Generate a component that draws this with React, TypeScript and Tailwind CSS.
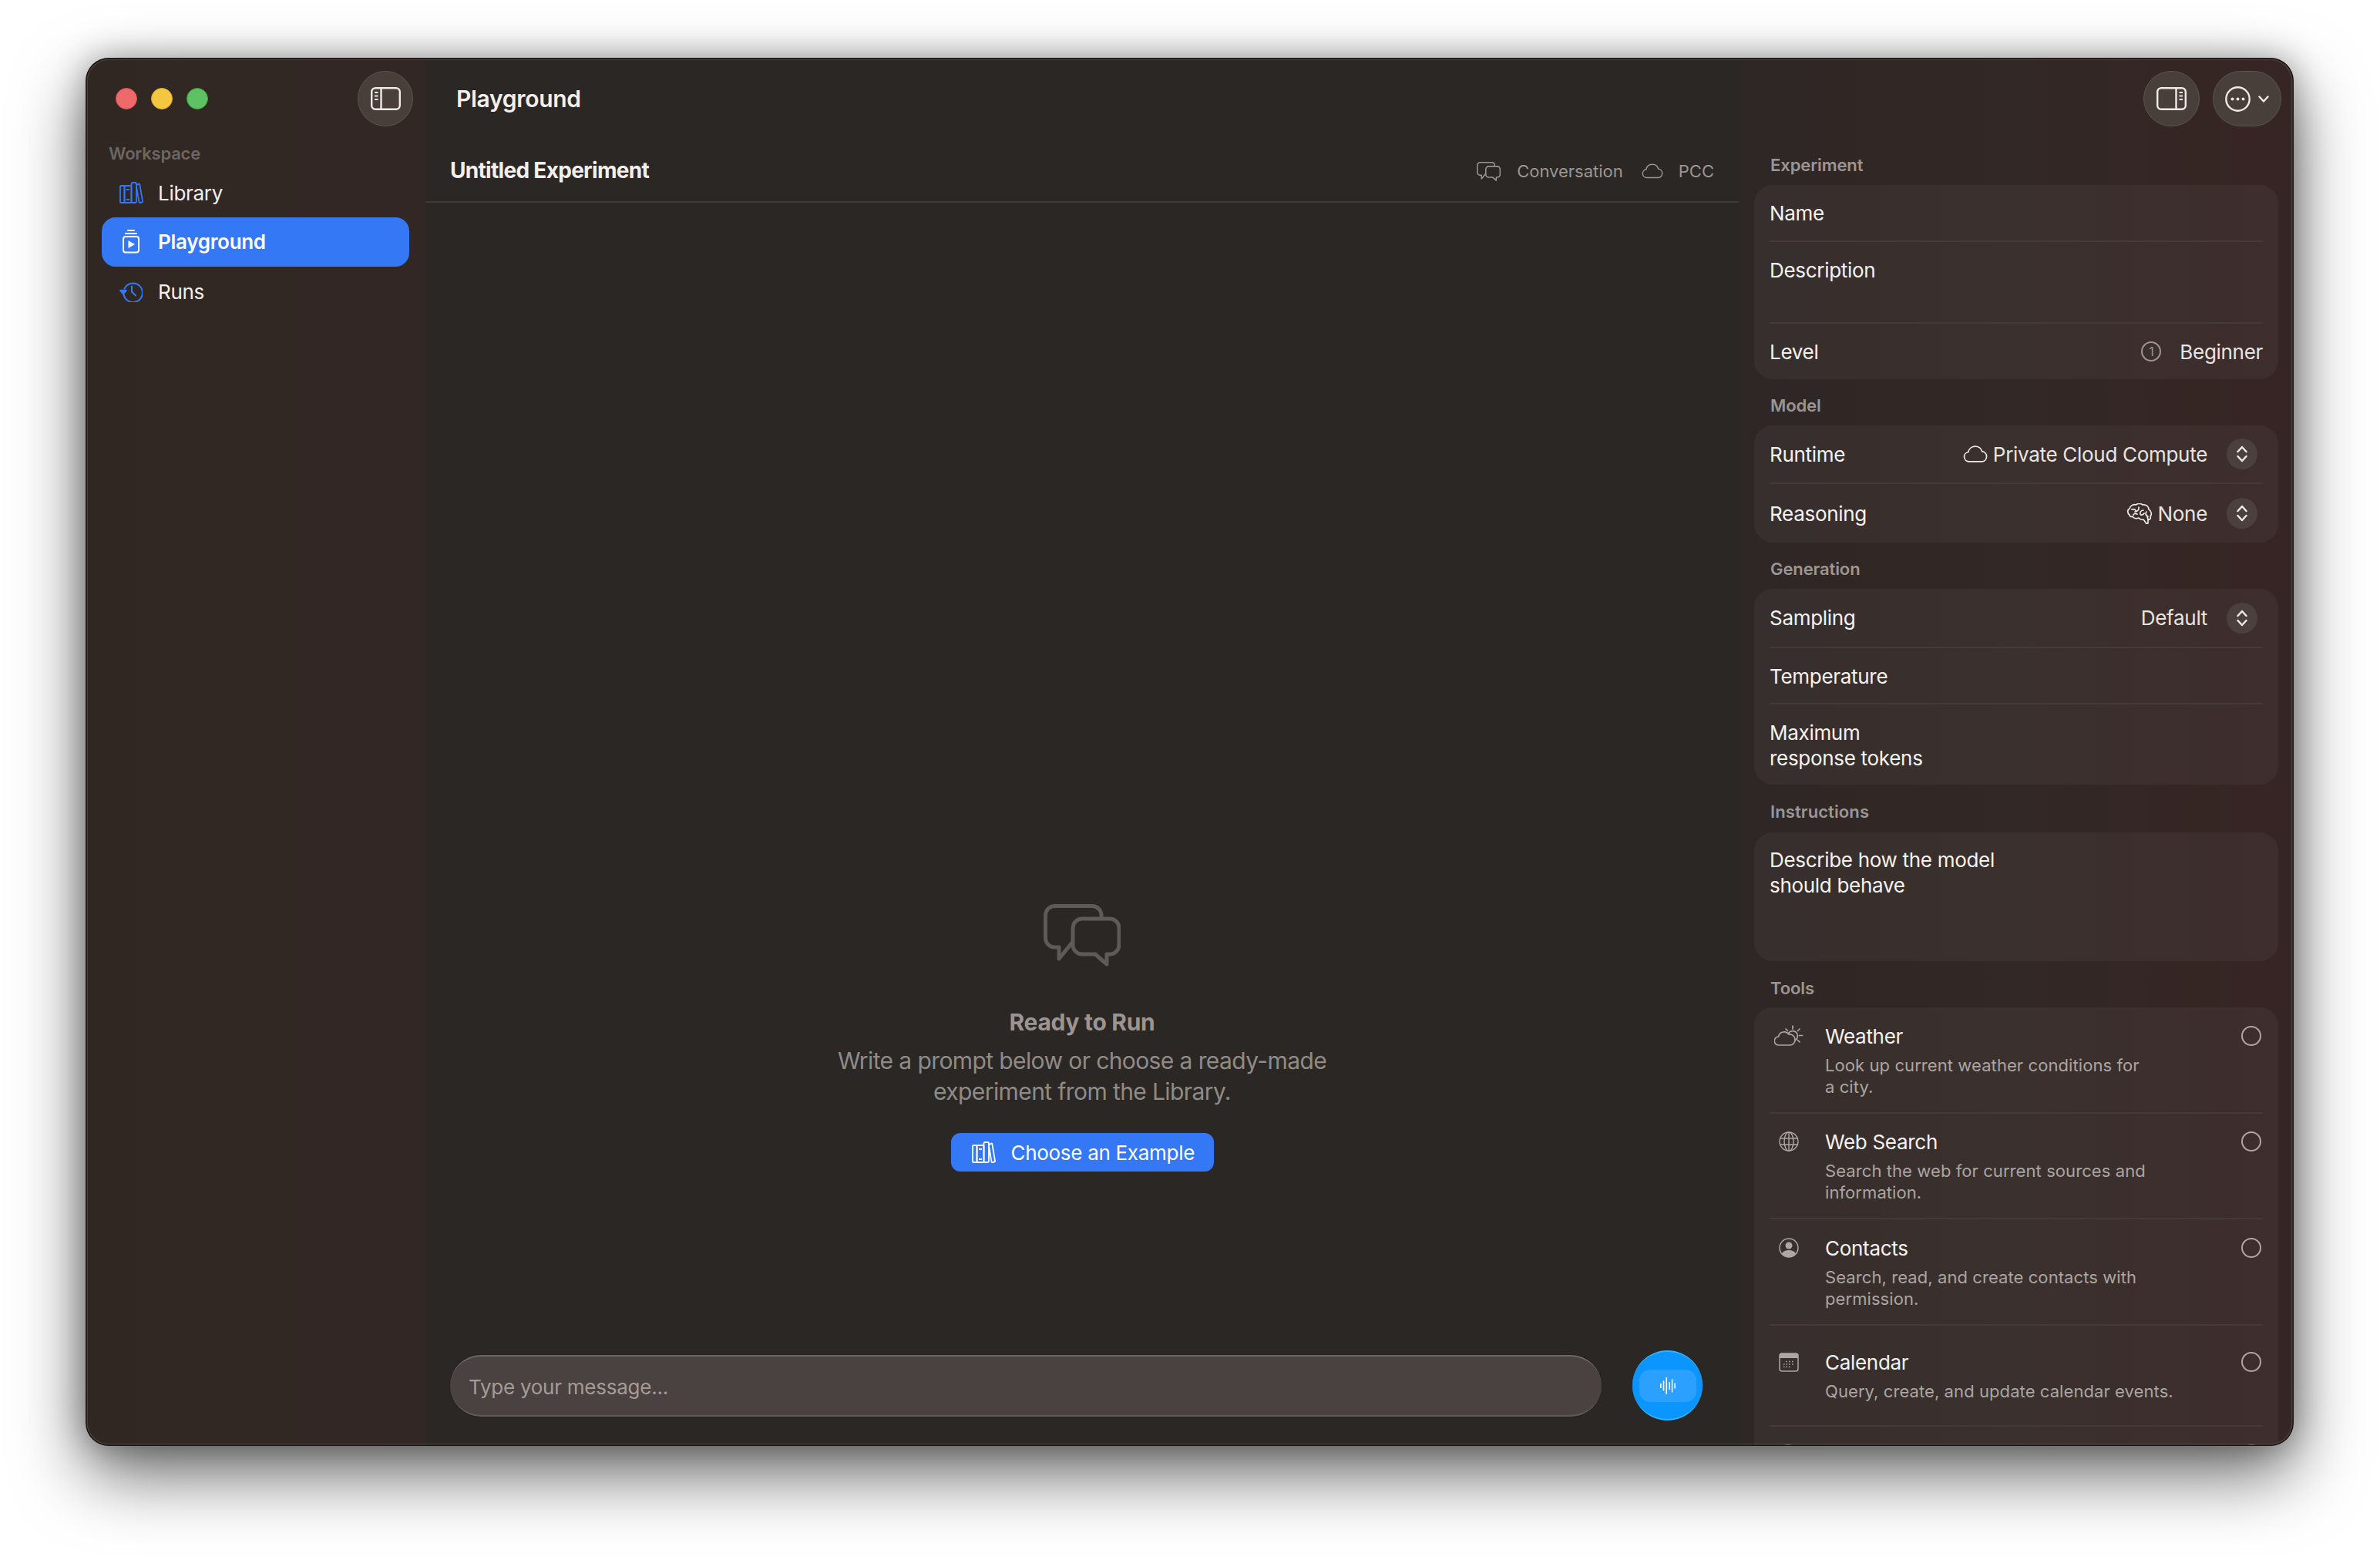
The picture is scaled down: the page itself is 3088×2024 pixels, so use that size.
import type { ReactNode } from "react";

function BooksIcon({ className }: { className?: string }) {
  return (
    <svg viewBox="0 0 31 28" width="31" height="28" fill="none" stroke="currentColor" strokeWidth="1.8" strokeLinejoin="round" className={className}>
      <rect x="1" y="5" width="5.5" height="22" rx="1" />
      <rect x="6.5" y="5" width="9" height="22" rx="1" />
      <rect x="15.5" y="1" width="6.5" height="26" rx="1.5" />
      <path d="M22 4.2 25 2.6c.6-.3 1.2 0 1.3.6L30 25.2c.1.6-.2 1.1-.8 1.3l-2.4.5c-.6.1-1.2-.2-1.3-.8L22 6" />
      <path d="M9 10h4M9 23h4" />
    </svg>
  );
}

function PlaygroundIcon() {
  return (
    <svg viewBox="0 0 24 31" width="24" height="31" fill="none" stroke="currentColor" strokeWidth="2" className="text-white">
      <path d="M8 1h8M5 5h14" strokeLinecap="round" />
      <rect x="2" y="9" width="20" height="20.5" rx="3" />
      <path d="M8.5 14v10l8.5-5z" fill="currentColor" stroke="none" />
    </svg>
  );
}

function RunsIcon() {
  return (
    <svg viewBox="0 0 30 28" width="30" height="28" fill="none" stroke="#3478f6" strokeWidth="2" strokeLinecap="round" strokeLinejoin="round">
      <path d="M6.5 10.5A12.3 12.3 0 1 1 5.5 18" />
      <path d="M1.2 12.8h7.6l-3.8 4.6z" fill="#3478f6" />
      <path d="M16 7.5v7l5 5" />
    </svg>
  );
}

function SidebarIcon({ right }: { right?: boolean }) {
  return (
    <svg viewBox="0 0 39 30" width="39" height="30" fill="none" stroke="#eeeae8" strokeWidth="2.4">
      <rect x="1.2" y="1.2" width="36.6" height="27.6" rx="5" />
      {right ? (
        <>
          <path d="M25.5 1.2v27.6" />
          <path d="M29.5 7h4.5M29.5 11.5h4.5M29.5 16h4.5" strokeWidth="1.8" />
        </>
      ) : (
        <>
          <path d="M13.5 1.2v27.6" />
          <path d="M5 7h4.5M5 11.5h4.5M5 16h4.5" strokeWidth="1.8" />
        </>
      )}
    </svg>
  );
}

function BubblesIcon({ width, height, stroke }: { width: number; height: number; stroke: string }) {
  return (
    <svg viewBox="0 0 100 81" width={width} height={height} fill="none" stroke={stroke} strokeWidth="5" strokeLinejoin="round" strokeLinecap="round">
      <path d="M75 17v-3A12 12 0 0 0 63 2.500H14.500A12 12 0 0 0 2.500 14.500V44A12 12 0 0 0 14.500 56H20V71L37 50" />
      <path d="M50 19h36a12 12 0 0 1 12 12v22a12 12 0 0 1-12 12h-4v13L67 65H50a12 12 0 0 1-12-12V31a12 12 0 0 1 12-12z" />
    </svg>
  );
}

function CloudIcon({ width = 32, height = 22, color = "#eeeae8" }: { width?: number; height?: number; color?: string }) {
  return (
    <svg viewBox="0 0 32 22" width={width} height={height} fill="none" stroke={color} strokeWidth="1.7">
      <path d="M7.500 20.800A6.200 6.200 0 0 1 6.700 8.500 9.300 9.300 0 0 1 24.700 7.700 6.600 6.600 0 0 1 24.800 20.800z" />
    </svg>
  );
}

function BrainIcon() {
  return (
    <svg viewBox="0 0 34 27" width="34" height="27" fill="none" stroke="#eeeae8" strokeWidth="1.700" strokeLinecap="round" strokeLinejoin="round">
      <path d="M4 15C1 13 1 8 4 7 5 3 9 1 12 2c3-2 7-2 9 0 4-1 8 2 8 6 4 2 4 7 2 9 1 3-1 5-3 4v4c0 2-2 2-3 0l-3-4c-3 1-5-1-6-2-3 1-7 1-8-2-2 1-4 0-4-2z" />
      <path d="M7 8c2-1 5 0 5 2M16 5c1 3-2 6-5 6M22 9c-3 0-5 3-4 5s4 1 5-1M26 11c-2 2-1 5 2 6M28 21l-1-4M9 15c1-2 3-2 5-1" />
    </svg>
  );
}

function Stepper() {
  return (
    <div className="ml-[25px] flex h-[40px] w-[40px] items-center justify-center rounded-full bg-[#4b403e]">
      <svg viewBox="0 0 16 24" width="16" height="24" fill="none" stroke="#eeeae8" strokeWidth="2.500" strokeLinecap="round" strokeLinejoin="round">
        <path d="M2.500 9 8 3l5.500 6M2.500 15 8 21l5.500-6" />
      </svg>
    </div>
  );
}

function WeatherIcon() {
  return (
    <svg viewBox="0 0 38 27" width="38" height="27" fill="none" stroke="#aca7a4" strokeWidth="1.700" strokeLinecap="round">
      <path d="M6 26A5.500 5.500 0 0 1 5.500 15 7.500 7.500 0 0 1 19 12 6.600 6.600 0 0 1 21 26z" />
      <path d="M18.500 10.500A6.500 6.500 0 1 1 27.500 19.500" />
      <path d="M24 1v4M15 5l2.500 2.500M33 5l-2.500 2.500M36.500 13.500h-4M33 22l-2.500-2.500" />
    </svg>
  );
}

function GlobeIcon() {
  return (
    <svg viewBox="0 0 26 28" width="26" height="28" fill="none" stroke="#aca7a4" strokeWidth="1.400">
      <circle cx="13" cy="14" r="12" />
      <ellipse cx="13" cy="14" rx="6" ry="12" />
      <path d="M13 2v24M1.500 10h23M1.500 18h23" />
    </svg>
  );
}

function ContactIcon() {
  return (
    <svg viewBox="0 0 26 28" width="26" height="28" fill="none">
      <circle cx="13" cy="14" r="12" stroke="#aca7a4" strokeWidth="1.500" />
      <circle cx="13" cy="11" r="4.500" fill="#aca7a4" />
      <path d="M3.800 21.500C6 18 9.500 17 13 17s7 1 9.200 4.500A12 12 0 0 1 13 26a12 12 0 0 1-9.200-4.500z" fill="#aca7a4" />
    </svg>
  );
}

function CalendarIcon() {
  return (
    <svg viewBox="0 0 26 25" width="26" height="25" fill="none">
      <rect x="1" y="1" width="24" height="23" rx="3" stroke="#aca7a4" strokeWidth="1.500" />
      <path d="M1 4a3 3 0 0 1 3-3h18a3 3 0 0 1 3 3v3H1z" fill="#aca7a4" />
      <path d="M9 11.500h1.500M13 11.500h1.500M17 11.500h1.500M6 15h1.500M9.500 15H11M13 15h1.500M17 15h1.500M6 18.500h1.500M9.500 18.500H11M13 18.500h1.500" stroke="#aca7a4" strokeWidth="1.400" />
    </svg>
  );
}

function SectionLabel({ children, tight }: { children: ReactNode; tight?: boolean }) {
  return <div className={`${tight ? "mb-[12px]" : "mb-[13px]"} h-[26px] pl-[21px] text-[22px] leading-[26px] font-semibold tracking-[-0.1px] text-[#9c9693]`}>{children}</div>;
}

function Card({ className, children }: { className?: string; children: ReactNode }) {
  return <div className={`rounded-[24px] bg-white/[0.04] px-[20px] ${className ?? ""}`}>{children}</div>;
}

function Row({ height, divider, children, className }: { height: string; divider?: boolean; children: ReactNode; className?: string }) {
  return (
    <div className={`flex ${height} items-center justify-between ${divider ? "border-b-2 border-[#443b39]" : ""} ${className ?? ""}`}>
      {children}
    </div>
  );
}

type Tool = { name: string; lines: string[]; icon: ReactNode; height: string };

const tools: Tool[] = [
  { name: "Weather", lines: ["Look up current weather conditions for", "a city."], icon: <WeatherIcon />, height: "h-[138px]" },
  { name: "Web Search", lines: ["Search the web for current sources and", "information."], icon: <GlobeIcon />, height: "h-[137px]" },
  { name: "Contacts", lines: ["Search, read, and create contacts with", "permission."], icon: <ContactIcon />, height: "h-[138px]" },
  { name: "Calendar", lines: ["Query, create, and update calendar events."], icon: <CalendarIcon />, height: "h-[131px]" },
];

function ToolRow({ tool }: { tool: Tool }) {
  return (
    <div className={`flex ${tool.height} items-center border-b-2 border-[#443b39]`}>
      <div className="flex w-full items-start">
        <div className="ml-[1px] flex h-[34px] w-[48px] shrink-0 items-center justify-center">{tool.icon}</div>
        <div className="mt-[1px] ml-[23px] flex-1">
          <div className="h-[34px] text-[26px] leading-[34px] tracking-[-0.3px] text-[#f5f2f0]">{tool.name}</div>
          <div className="mt-[6px] text-[22px] leading-[28px] tracking-[0.08px] text-[#aaa5a2]">
            {tool.lines.map((line) => (
              <div key={line}>{line}</div>
            ))}
          </div>
        </div>
        <div className="mr-[2px] flex h-[34px] items-center">
          <div className="h-[26px] w-[26px] rounded-full border-2 border-[#aca7a4]" />
        </div>
      </div>
    </div>
  );
}

function Sidebar() {
  return (
    <aside className="w-[441px] shrink-0 bg-gradient-to-r from-[#302722] to-[#332725]">
      <div className="flex h-[106px] items-center justify-between pr-[16px] pl-[39px]">
        <div className="flex gap-[18px]">
          <div className="h-[28px] w-[28px] rounded-full border border-[#d9534f] bg-[#ee6a6a]" />
          <div className="h-[28px] w-[28px] rounded-full border border-[#d9ab2e] bg-[#f3c73f]" />
          <div className="h-[28px] w-[28px] rounded-full border border-[#3f9c45] bg-[#5fc262]" />
        </div>
        <button className="flex h-[72px] w-[72px] items-center justify-center rounded-full border border-[#5e5450] bg-[#483e3a]">
          <SidebarIcon />
        </button>
      </div>
      <div className="flex h-[37px] items-center pl-[30px] text-[22px] font-semibold tracking-[-0.2px] text-[#6d6663]">Workspace</div>
      <nav className="px-[21px]">
        <div className="flex h-[64px] items-center gap-[19px] pl-[22px] text-[26px] tracking-[-0.3px] text-[#f2efed]">
          <div className="flex w-[32px] justify-center text-[#3478f6]"><BooksIcon /></div>
          Library
        </div>
        <div className="flex h-[64px] items-center gap-[19px] rounded-[18px] bg-[#3478f6] pb-[2px] pl-[22px] text-[26px] font-semibold tracking-[-0.3px] text-white">
          <div className="flex w-[32px] justify-center"><PlaygroundIcon /></div>
          Playground
        </div>
        <div className="flex h-[64px] items-center gap-[19px] pl-[22px] text-[26px] tracking-[-0.3px] text-[#f2efed]">
          <div className="flex w-[32px] justify-center"><RunsIcon /></div>
          Runs
        </div>
      </nav>
    </aside>
  );
}

function Main() {
  return (
    <main className="flex min-w-0 flex-1 flex-col bg-[#2b2725]">
      <div className="flex h-[106px] shrink-0 items-center pl-[40px] text-[30px] font-semibold tracking-[-0.3px] text-[#f2efed]">Playground</div>
      <div className="flex h-[82px] shrink-0 items-center justify-between border-b-2 border-[#403a38] pr-[32px] pl-[32px]">
        <div className="text-[28px] font-bold tracking-[-0.7px] text-[#f2efed]">Untitled Experiment</div>
        <div className="flex items-center pt-[2px] text-[22px] tracking-[0px] text-[#9c9693]">
          <BubblesIcon width={31} height={25} stroke="#9c9693" />
          <span className="ml-[21px]">Conversation</span>
          <span className="ml-[24px]"><CloudIcon width={28} height={20} color="#9c9693" /></span>
          <span className="ml-[20px]">PCC</span>
        </div>
      </div>
      <div className="flex flex-1 flex-col items-center justify-end pb-[232px]">
        <BubblesIcon width={100} height={81} stroke="#5f5a58" />
        <div className="mt-[52px] text-[30px] leading-[40px] font-bold tracking-[-0.3px] text-[#9a9592]">Ready to Run</div>
        <div className="mt-[10px] text-center text-[30px] leading-[40px] tracking-[-0.6px] text-[#8f8b88]">
          <div>Write a prompt below or choose a ready-made</div>
          <div>experiment from the Library.</div>
        </div>
        <button className="mt-[34px] flex h-[50px] w-[341px] items-center gap-[20px] rounded-[12px] bg-[#3478f6] pl-[27px] text-[26px] tracking-[-0.3px] text-white">
          <BooksIcon />
          Choose an Example
        </button>
      </div>
      <div className="flex shrink-0 items-center gap-[40px] pb-[33px] pl-[32px]">
        <div className="flex h-[80px] w-[1494px] items-center rounded-full border-t-2 border-b-2 border-t-[#6f6764] border-b-[#625a57] bg-[#4a4240] pt-[4px] pl-[24px] text-[26px] tracking-[-0.25px] text-[#a29c99] shadow-[0_0_0_1px_#222]">
          Type your message...
        </div>
        <button className="relative flex h-[91px] w-[91px] items-center justify-center rounded-full border-t-2 border-b-2 border-t-[#2fb4ff] border-b-[#2fb4ff] bg-[#0a95ff]">
          <div className="flex h-[42px] w-[74px] items-center justify-center rounded-[14px] bg-[#2ba0ff]">
            <svg viewBox="0 0 20 22" width="20" height="22" fill="#fff">
              <rect x="0" y="8" width="1.600" height="6" />
              <rect x="3.700" y="4.500" width="1.600" height="13" />
              <rect x="7.400" y="0" width="1.600" height="22" />
              <rect x="11.100" y="6" width="1.600" height="10" />
              <rect x="14.800" y="2.500" width="1.600" height="17" />
              <rect x="18.400" y="7.500" width="1.600" height="7" />
            </svg>
          </div>
        </button>
      </div>
    </main>
  );
}

function Inspector() {
  return (
    <aside className="w-[720px] shrink-0 overflow-hidden bg-gradient-to-r from-[#2f2725] via-[#322826] to-[#372524] text-[26px] tracking-[-0.3px] text-[#f5f2f0]">
      <div className="flex h-[126px] justify-end gap-[17px] pt-[17px] pr-[16px]">
        <button className="flex h-[72px] w-[73px] items-center justify-center rounded-full border border-[#5e5450] bg-[#483e3a]">
          <SidebarIcon right />
        </button>
        <button className="flex h-[72px] w-[89px] items-center justify-center gap-[10px] rounded-full border border-[#5e5450] bg-[#483e3a]">
          <svg viewBox="0 0 33 33" width="33" height="33" fill="none">
            <circle cx="16.500" cy="16.500" r="15.200" stroke="#eeeae8" strokeWidth="2.400" />
            <circle cx="9.500" cy="16.500" r="2" fill="#eeeae8" />
            <circle cx="16.500" cy="16.500" r="2" fill="#eeeae8" />
            <circle cx="23.500" cy="16.500" r="2" fill="#eeeae8" />
          </svg>
          <svg viewBox="0 0 14 9" width="14" height="9" fill="none" stroke="#eeeae8" strokeWidth="2.400" strokeLinecap="round" strokeLinejoin="round">
            <path d="M1.500 1.500 7 7.500l5.500-6" />
          </svg>
        </button>
      </div>
      <div className="px-[20px]">
        <SectionLabel>Experiment</SectionLabel>
        <Card className="h-[252px]">
          <Row height="h-[74px]" divider><span>Name</span></Row>
          <div className="h-[106px] border-b-2 border-[#443b39] pt-[20px] leading-[34px]">Description</div>
          <Row height="h-[72px]">
            <span>Level</span>
            <div className="flex items-center text-[#e8e4e2]">
              <div className="flex h-[26px] w-[26px] items-center justify-center rounded-full border-2 border-[#9c9693] text-[16px] text-[#9c9693]">1</div>
              <span className="ml-[24px]">Beginner</span>
            </div>
          </Row>
        </Card>

        <div className="h-[21px]" />
        <SectionLabel>Model</SectionLabel>
        <Card className="h-[152px]">
          <Row height="h-[76px]" divider>
            <span>Runtime</span>
            <div className="flex items-center pr-[7px] text-[#e8e4e2]">
              <CloudIcon />
              <span className="ml-[7px]">Private Cloud Compute</span>
              <Stepper />
            </div>
          </Row>
          <Row height="h-[76px]">
            <span>Reasoning</span>
            <div className="flex items-center pr-[7px] text-[#e8e4e2]">
              <BrainIcon />
              <span className="ml-[7px]">None</span>
              <Stepper />
            </div>
          </Row>
        </Card>

        <div className="h-[21px]" />
        <SectionLabel>Generation</SectionLabel>
        <Card className="h-[254px]">
          <Row height="h-[77px]" divider>
            <span>Sampling</span>
            <div className="flex items-center pr-[7px] text-[#e8e4e2]">
              <span>Default</span>
              <Stepper />
            </div>
          </Row>
          <Row height="h-[73px]" divider className="pt-[2px]"><span>Temperature</span></Row>
          <div className="flex h-[104px] items-center pt-[2px] leading-[33px]">Maximum<br />response tokens</div>
        </Card>

        <div className="h-[22px]" />
        <div className="mb-[14px] h-[26px] pl-[21px] text-[22px] leading-[26px] font-semibold tracking-[0.1px] text-[#9c9693]">Instructions</div>
        <Card className="h-[167px] pt-[19px]">
          <div className="leading-[33px]">Describe how the model<br />should behave</div>
        </Card>

        <div className="h-[22px]" />
        <SectionLabel tight>Tools</SectionLabel>
        <Card className="h-[700px]">
          {tools.map((tool) => (
            <ToolRow key={tool.name} tool={tool} />
          ))}
          <div className="flex items-start justify-between pt-[23px]">
            <div className="ml-[11px] h-[26px] w-[26px] rounded-full bg-[#aca7a4]" />
            <div className="mr-[2px] h-[26px] w-[26px] rounded-full border-2 border-[#aca7a4]" />
          </div>
        </Card>
      </div>
    </aside>
  );
}

export default function App() {
  return (
    <div className="h-[2024px] w-[3088px] overflow-hidden bg-white pt-[75px] pl-[111px] [font-family:Inter,'Liberation_Sans',sans-serif]">
      <div className="relative flex h-[1801px] w-[2865px] overflow-hidden rounded-[30px] shadow-[0_36px_90px_rgba(0,0,0,0.6),0_0_40px_rgba(0,0,0,0.3)]">
        <Sidebar />
        <Main />
        <Inspector />
        <div className="pointer-events-none absolute inset-0 rounded-[30px] shadow-[inset_0_0_0_1.5px_#171514,inset_0_0_0_3px_rgba(255,255,255,0.1)]" />
      </div>
    </div>
  );
}
